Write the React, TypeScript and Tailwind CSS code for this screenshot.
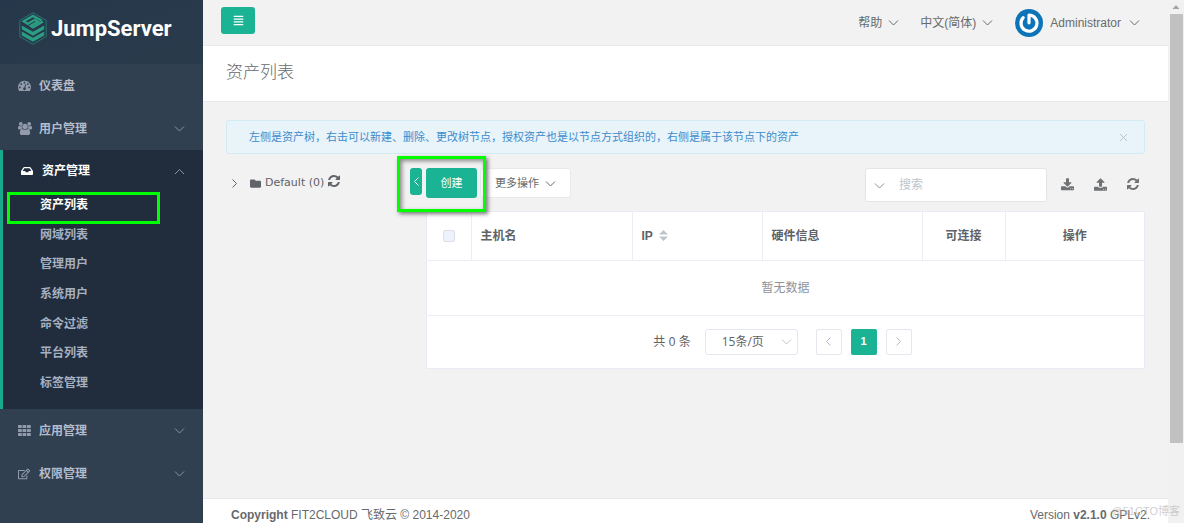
import { useState } from 'react'
import { FaInbox, FaRegEdit, FaFolder, FaAlignJustify } from 'react-icons/fa'

type Direction = 'down' | 'up' | 'left' | 'right'

const CHEVRON_POINTS: Record<Direction, string> = {
  down: '1,3.5 5.5,8 10,3.5',
  up: '1,8 5.5,3.5 10,8',
  left: '7.5,1.5 3.5,5.5 7.5,9.5',
  right: '3.5,1.5 7.5,5.5 3.5,9.5',
}

function Chevron({ dir = 'down', className = '' }: { dir?: Direction; className?: string }) {
  return (
    <svg viewBox="0 0 11 11" className={`size-[11px] shrink-0 ${className}`} fill="none" stroke="currentColor" aria-hidden="true">
      <polyline points={CHEVRON_POINTS[dir]} />
    </svg>
  )
}

function DashboardIcon() {
  return (
    <svg viewBox="0 0 1792 1792" className="size-[13px]" fill="currentColor" aria-hidden="true">
      <path d="M384 1152q0-53-37.5-90.5t-90.5-37.5-90.5 37.5-37.5 90.5 37.5 90.5 90.5 37.5 90.5-37.5 37.5-90.5zm192-448q0-53-37.5-90.5t-90.5-37.5-90.5 37.5-37.5 90.5 37.5 90.5 90.5 37.5 90.5-37.5 37.5-90.5zm428 481l101-382q6-26-7.5-48.5t-38.5-29.5-48 6.5-30 39.5l-101 382q-60 5-107 43.5t-63 98.5q-20 77 20 146t117 89 146-20 89-117q16-60-6-117t-72-91zm660-33q0-53-37.5-90.5t-90.5-37.5-90.5 37.5-37.5 90.5 37.5 90.5 90.5 37.5 90.5-37.5 37.5-90.5zm-640-640q0-53-37.5-90.5t-90.5-37.5-90.5 37.5-37.5 90.5 37.5 90.5 90.5 37.5 90.5-37.5 37.5-90.5zm448 192q0-53-37.5-90.5t-90.5-37.5-90.5 37.5-37.5 90.5 37.5 90.5 90.5 37.5 90.5-37.5 37.5-90.5zm320 448q0 261-141 483-19 29-54 29h-1402q-35 0-54-29-141-221-141-483 0-182 71-348t191-286 286-191 348-71 348 71 286 191 191 286 71 348z" />
    </svg>
  )
}

function UsersIcon() {
  return (
    <svg viewBox="-64 0 1920 1792" className="h-[13px] w-3.5" fill="currentColor" aria-hidden="true">
      <path d="M529 896q-162 5-265 128h-134q-82 0-138-40.5t-56-118.5q0-353 124-353 6 0 43.5 21t97.5 42.5 119 21.5q67 0 133-23-5 37-5 66 0 159 90 256zm1071 637q0 120-73 189.5t-194 69.5h-874q-121 0-194-69.5t-73-189.5q0-53 3.5-103.5t14-109 26.5-108.5 43-97.5 62-81 85.5-53.5 111.5-20q10 0 43 21.5t73 48 107 48 135 21.5 135-21.5 107-48 73-48 43-21.5q61 0 111.5 20t85.5 53.5 62 81 43 97.5 26.5 108.5 14 109 3.5 103.5zm-1024-1277q0 106-75 181t-181 75-181-75-75-181 75-181 181-75 181 75 75 181zm704 384q0 159-112.5 271.5t-271.5 112.5-271.5-112.5-112.5-271.5 112.5-271.5 271.5-112.5 271.5 112.5 112.5 271.5zm576 225q0 78-56 118.5t-138 40.5h-134q-103-123-265-128 90-97 90-256 0-29-5-66 66 23 133 23 59 0 119-21.5t97.5-42.5 43.5-21q124 0 124 353zm-128-609q0 106-75 181t-181 75-181-75-75-181 75-181 181-75 181 75 75 181z" />
    </svg>
  )
}

function GridIcon() {
  return (
    <svg viewBox="0 0 13 11" className="h-[11px] w-[13px]" fill="currentColor" aria-hidden="true">
      {[0, 4, 8].map((y) =>
        [0, 4.5, 9].map((x) => <rect key={`${x}-${y}`} x={x} y={y} width="3.8" height="3" rx="0.5" />)
      )}
    </svg>
  )
}

function RefreshIcon({ className = '' }: { className?: string }) {
  return (
    <svg viewBox="0 128 1536 1536" className={className} fill="currentColor" aria-hidden="true">
      <path d="M1511 1056q0 5-1 7-64 268-268 434.5t-478 166.5q-146 0-282.5-55t-243.5-157l-129 129q-19 19-45 19t-45-19-19-45v-448q0-26 19-45t45-19h448q26 0 45 19t19 45-19 45l-137 137q71 66 161 102t187 36q134 0 250-65t186-179q11-17 53-117 8-23 30-23h192q13 0 22.5 9.5t9.5 22.5zm25-800v448q0 26-19 45t-45 19h-448q-26 0-45-19t-19-45 19-45l138-138q-148-137-349-137-134 0-250 65t-186 179q-11 17-53 117-8 23-30 23h-199q-13 0-22.5-9.5t-9.5-22.5v-7q65-268 270-434.5t480-166.5q146 0 284 55.5t245 156.5l130-129q19-19 45-19t45 19 19 45z" />
    </svg>
  )
}

function DownloadIcon() {
  return (
    <svg viewBox="0 0 1664 1600" className="size-[13px]" fill="currentColor" aria-hidden="true">
      <path d="M1280 1344q0-26-19-45t-45-19-45 19-19 45 19 45 45 19 45-19 19-45zm256 0q0-26-19-45t-45-19-45 19-19 45 19 45 45 19 45-19 19-45zm128-224v320q0 40-28 68t-68 28h-1472q-40 0-68-28t-28-68v-320q0-40 28-68t68-28h465l135 136q58 56 136 56t136-56l136-136h464q40 0 68 28t28 68zm-325-569q17 41-14 70l-448 448q-18 19-45 19t-45-19l-448-448q-31-29-14-70 17-39 59-39h256v-448q0-26 19-45t45-19h256q26 0 45 19t19 45v448h256q42 0 59 39z" />
    </svg>
  )
}

function UploadIcon() {
  return (
    <svg viewBox="0 0 1664 1600" className="size-[13px]" fill="currentColor" aria-hidden="true">
      <path d="M1280 1408q0-26-19-45t-45-19-45 19-19 45 19 45 45 19 45-19 19-45zm256 0q0-26-19-45t-45-19-45 19-19 45 19 45 45 19 45-19 19-45zm128-224v320q0 40-28 68t-68 28h-1472q-40 0-68-28t-28-68v-320q0-40 28-68t68-28h427q21 56 70.5 92t110.5 36h256q61 0 110.5-36t70.5-92h427q40 0 68 28t28 68zm-325-648q-17 40-59 40h-256v448q0 26-19 45t-45 19h-256q-26 0-45-19t-19-45v-448h-256q-42 0-59-40-17-39 14-69l448-448q18-19 45-19t45 19l448 448q31 30 14 69z" />
    </svg>
  )
}

function LogoMark() {
  return (
    <svg viewBox="0 0 28 33" className="h-[33px] w-7 shrink-0" fill="none" aria-hidden="true">
      <path d="M14 0.7 27.2 8.4v16.2L14 32.3 0.8 24.6V8.4z" stroke="#2b8478" strokeWidth="0.8" />
      <path d="M22.6 8.6 14 3.9 4.6 9.3l4.2 2.5 7-4 3.2 1.9-7.4 4.2 2.4 1.5 10-5.8" stroke="#2a9d83" strokeWidth="2.3" />
      <g fill="#2a9d83">
        <path d="M2.8 13.4 14 19.8l11.2-6.4v3.8L14 23.7 2.8 17.2z" />
        <path d="M2.8 19.4 14 25.8l11.2-6.4v4L14 29.8 2.8 23.4z" />
      </g>
    </svg>
  )
}

function Avatar() {
  return (
    <svg viewBox="0 0 28 28" className="size-7" aria-hidden="true">
      <circle cx="14" cy="14" r="14" fill="#0d74b7" />
      <path d="M14 13.8V6.2a8 8 0 1 1-5.8 2.5" fill="none" stroke="#fff" strokeWidth="3.2" strokeLinecap="round" strokeLinejoin="round" />
    </svg>
  )
}

const ASSET_ITEMS = ['资产列表', '网域列表', '管理用户', '系统用户', '命令过滤', '平台列表', '标签管理']

const TIP_TEXT = [
  '左侧是资产树',
  '右击可以新建、删除、更改树节点',
  '授权资产也是以节点方式组织的',
  '右侧是属于该节点下的资产',
].join('\uff0c')

function MenuItem({ icon, label, expandable = true }: { icon: React.ReactNode; label: string; expandable?: boolean }) {
  return (
    <li>
      <a href="#" className="flex h-[43px] items-center pr-[18px] pl-[18px] text-xs font-semibold text-[#b4bccb]">
        <span className="flex w-[21px] items-center text-[#929baa]">{icon}</span>
        <span className="flex-1">{label}</span>
        {expandable && <Chevron className="text-[#8893a3]" />}
      </a>
    </li>
  )
}

function Sidebar() {
  return (
    <aside className="w-[203px] shrink-0 bg-[#304051]">
      <div className="flex h-16 items-center gap-1 bg-linear-to-br from-[#25374a] to-[#2a3b4c] pb-2 pl-[19px]">
        <LogoMark />
        <span className="font-[Roboto,sans-serif] text-[22px] font-bold text-white">JumpServer</span>
      </div>
      <nav>
        <ul>
          <MenuItem icon={<DashboardIcon />} label="仪表盘" expandable={false} />
          <MenuItem icon={<UsersIcon />} label="用户管理" />
          <li className="border-l-3 border-[#19aa8d] bg-[#212d3d] pb-[11px]">
            <a href="#" className="flex h-10 items-center px-[18px] pt-0.5 text-xs font-semibold text-white">
              <span className="flex w-[21px] items-center">
                <FaInbox className="size-3" />
              </span>
              <span className="flex-1">资产管理</span>
              <Chevron dir="up" className="text-[#8893a3]" />
            </a>
            <ul className="flex h-52 flex-col">
              {ASSET_ITEMS.map((item, i) => (
                <li key={item} className="relative flex-1">
                  <a
                    href="#"
                    className={`flex h-full items-center pl-[37px] text-xs font-semibold ${i === 0 ? 'text-white' : 'text-[#a7b1c2]'}`}
                  >
                    {item}
                  </a>
                  {/* highlight frame on the current page */}
                  {i === 0 && <span className="absolute top-0.5 left-1 h-8 w-[153px] border-3 border-[#00ff00]" />}
                </li>
              ))}
            </ul>
          </li>
          <MenuItem icon={<GridIcon />} label="应用管理" />
          <MenuItem icon={<FaRegEdit className="size-3" />} label="权限管理" />
        </ul>
      </nav>
    </aside>
  )
}

function TopBar() {
  return (
    <header className="flex h-[46px] shrink-0 items-center justify-between border-b border-[#e9eaec] pr-7 pl-[18px]">
      <button aria-label="菜单" className="mb-1 flex h-[27px] w-[34px] items-center justify-center rounded-[3px] bg-[#1ab394] text-white">
        <FaAlignJustify className="size-[11px]" />
      </button>
      <div className="flex items-center text-xs text-[#676a6c]">
        <button className="flex items-center gap-1.5">
          帮助
          <Chevron />
        </button>
        <button className="ml-[21px] flex items-center gap-1.5">
          中文(简体)
          <Chevron />
        </button>
        <button className="ml-[22px] flex items-center">
          <Avatar />
          <span className="mr-2 ml-[7px] text-xs">Administrator</span>
          <Chevron />
        </button>
      </div>
    </header>
  )
}

function Toolbar() {
  return (
    <div className="flex items-start justify-between">
      <div className="flex gap-[3px]">
        <button className="h-[30px] w-[51px] rounded-[3px] bg-[#1ab394] text-[11px] text-white">创建</button>
        <button className="flex h-[30px] items-center gap-1.5 rounded-[3px] border border-[#e7eaec] bg-white px-3.5 text-[11px] text-[#676a6c]">
          更多操作
          <Chevron />
        </button>
      </div>
      <div className="flex items-center text-[#6f7274]">
        <div className="flex h-[34px] w-[182px] items-center rounded-[3px] border border-[#e2e4e8] bg-white pl-2">
          <Chevron className="text-[#8c8f94]" />
          <input
            aria-label="搜索"
            placeholder="搜索"
            className="w-full min-w-0 pr-2 pl-3.5 text-xs outline-none placeholder:text-[#c0c4cc]"
          />
        </div>
        <div className="mr-1.5 ml-3.5 flex items-center gap-5 pb-0.5">
          <button aria-label="下载">
            <DownloadIcon />
          </button>
          <button aria-label="上传">
            <UploadIcon />
          </button>
          <button aria-label="刷新">
            <RefreshIcon className="size-3" />
          </button>
        </div>
      </div>
    </div>
  )
}

function AssetTable() {
  return (
    <div className="mt-[9px] border border-[#e9ecf5] bg-white text-xs text-[#606266]">
      <table className="w-full table-fixed border-collapse">
        <thead>
          <tr className="h-12 border-b border-[#ebeef5] text-left">
            <th className="w-11 border-r border-[#ebeef5]">
              <input
                type="checkbox"
                disabled
                aria-label="全选"
                className="mx-auto block size-3 appearance-none rounded-[2px] border border-[#dcdfe6] bg-[#edf2fc]"
              />
            </th>
            <th className="w-[161px] border-r border-[#ebeef5] px-[9px] font-semibold">主机名</th>
            <th className="w-[130px] border-r border-[#ebeef5] px-[9px] font-semibold">
              <span className="flex items-center gap-1.5">
                IP
                <svg viewBox="0 0 9 11" className="h-[11px] w-[9px]" fill="#c0c4cc" aria-hidden="true">
                  <path d="M4.5 0 9 4.5H0zM4.5 11 0 6.5h9z" />
                </svg>
              </span>
            </th>
            <th className="w-[160px] border-r border-[#ebeef5] px-[9px] font-semibold">硬件信息</th>
            <th className="w-[83px] border-r border-[#ebeef5] text-center font-semibold">可连接</th>
            <th className="text-center font-semibold">操作</th>
          </tr>
        </thead>
        <tbody>
          <tr className="h-[55px] border-b border-[#ebeef5]">
            <td colSpan={6} className="text-center text-[#909399]">
              暂无数据
            </td>
          </tr>
        </tbody>
      </table>
      <div className="flex h-[52px] items-center justify-center pr-1.5">
        <span>共 0 条</span>
        <div className="relative ml-3.5">
          <select
            aria-label="每页条数"
            className="h-[26px] w-[93px] appearance-none rounded-[3px] border border-[#e4e7ed] bg-white pl-4 font-['Open_Sans','Noto_Sans_CJK_SC',sans-serif] text-xs outline-none"
          >
            <option>15条/页</option>
          </select>
          <Chevron className="pointer-events-none absolute top-[7px] right-1.5 text-[#c0c4cc]" />
        </div>
        <button aria-label="上一页" className="ml-[18px] flex size-[26px] items-center justify-center rounded-[2px] border border-[#e4e7ed] text-[#b5b9c2]">
          <Chevron dir="left" />
        </button>
        <button className="mx-[9px] size-[26px] rounded-[2px] bg-[#1ab394] text-[11px] font-bold text-white">1</button>
        <button aria-label="下一页" className="flex size-[26px] items-center justify-center rounded-[2px] border border-[#e4e7ed] text-[#b5b9c2]">
          <Chevron dir="right" />
        </button>
      </div>
    </div>
  )
}

export default function App() {
  const [showTip, setShowTip] = useState(true)

  return (
    <div className="relative flex h-screen overflow-hidden bg-[#f2f2f2] font-['Liberation_Sans','Noto_Sans_CJK_SC',sans-serif]">
      <Sidebar />
      <div className="flex min-w-0 flex-1 flex-col">
        <TopBar />
        <div className="flex h-14 shrink-0 items-center border-b border-[#e7eaec] bg-white px-[23px] pb-0.5">
          <h1 className="text-[17px] font-light text-[#676a6c]">资产列表</h1>
        </div>

        <main className="min-h-0 flex-1 px-[23px] pt-[18px]">
          {showTip && (
            <div className="flex h-[34px] items-center justify-between rounded-[3px] border border-[#d2ecf4] bg-[#e8f3fa] pr-4 pl-[22px] text-[11px] text-[#3d8ccb]">
              <p>{TIP_TEXT}</p>
              <button aria-label="关闭" className="text-[#b9c3cc]" onClick={() => setShowTip(false)}>
                <svg viewBox="0 0 9 9" className="size-[9px]" stroke="currentColor" aria-hidden="true">
                  <path d="m1 1 7 7M8 1 1 8" />
                </svg>
              </button>
            </div>
          )}

          <div className="relative mt-3.5 flex items-start">
            <div className="flex w-[184px] shrink-0 items-center gap-1 pt-[7px] pl-[3px] text-[#606367]">
              <Chevron dir="right" />
              <FaFolder className="ml-1.5 size-[11px]" />
              <span className="font-['DejaVu_Sans',sans-serif] text-[11px]">Default (0)</span>
              <RefreshIcon className="mb-1 size-3" />
            </div>
            <button aria-label="收起" className="flex h-[27px] w-3 items-center justify-center rounded-[3px] bg-[#1ab394] text-white">
              <Chevron dir="left" />
            </button>
            <div className="ml-1 min-w-0 flex-1">
              <Toolbar />
              <AssetTable />
            </div>
            {/* highlight frame around the create button */}
            <span className="pointer-events-none absolute -top-3 left-[171px] h-14 w-[89px] border-3 border-[#00ff00] shadow-[2px_2px_4px_#777,inset_2px_2px_4px_#888]" />
          </div>
        </main>

        <footer className="flex shrink-0 justify-between border-t border-[#e7eaec] bg-white pt-2 pr-[18px] pl-7 text-xs leading-4 text-[#676a6c]">
          <p>
            <strong>Copyright</strong> FIT2CLOUD 飞致云 © 2014-2020
          </p>
          <p>
            Version <strong>v2.1.0</strong> GPLv2.
          </p>
        </footer>
      </div>

      {/* scrollbar */}
      <div className="flex w-4 shrink-0 flex-col items-center bg-[#f1f1f1]">
        <svg viewBox="0 0 16 14" className="h-3.5 w-4" fill="#a3a3a3" aria-hidden="true">
          <path d="m8 5 3.5 4h-7z" />
        </svg>
        <div className="h-[82%] w-[13px] bg-[#c1c1c1]" />
      </div>
      <span className="absolute right-1 bottom-1 text-[11px] leading-4 text-[#b9b9b9]/70">@51CTO博客</span>
    </div>
  )
}
